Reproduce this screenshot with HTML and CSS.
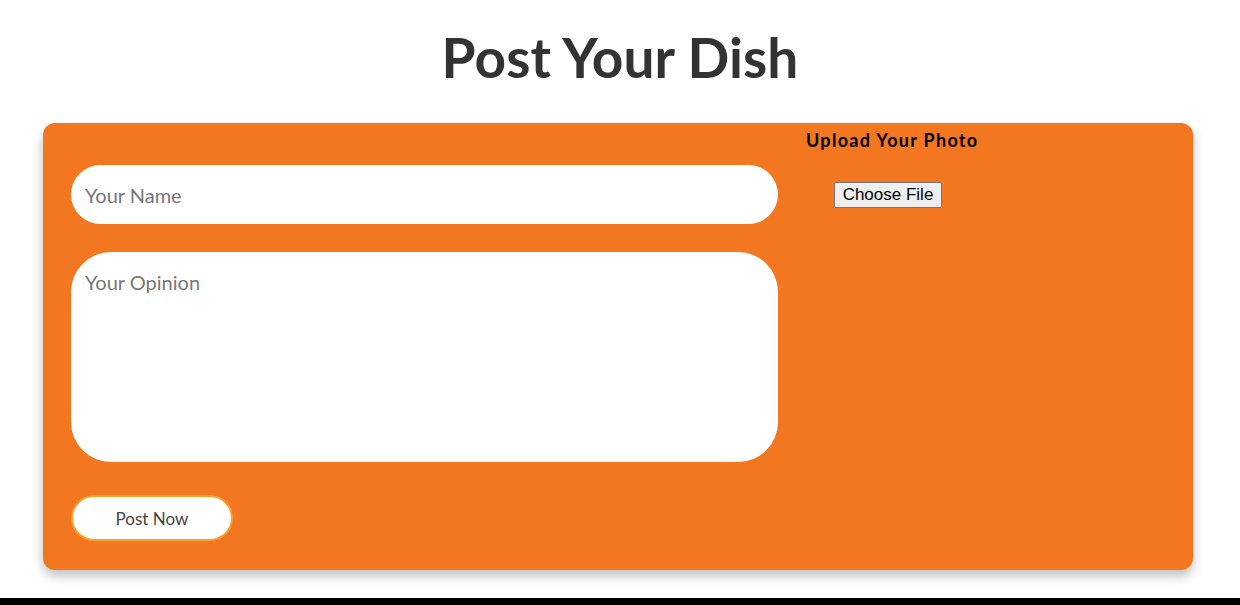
FILE: index.html
```html
<!DOCTYPE html>
<html>
<head>
<meta charset="utf-8">
<link rel="stylesheet" href="styles.css">
</head>
<body>
<h1 class="title">Post Your Dish</h1>
<form class="card">
  <div class="left">
    <input class="name" type="text" placeholder="Your Name">
    <textarea class="opinion" placeholder="Your Opinion"></textarea>
    <button class="post" type="button">Post Now</button>
  </div>
  <div class="right">
    <label class="upload-label">Upload Your Photo</label>
    <input class="file" type="file">
  </div>
</form>
<div class="footer"></div>
</body>
</html>
```

FILE: styles.css
```css
html, body {
  margin: 0;
  padding: 0;
  background: #fff;
  font-family: "Lato", "Noto Sans", sans-serif;
  overflow: hidden;
}
.title {
  margin: 0;
  padding-top: 25px;
  height: 123px;
  box-sizing: border-box;
  text-align: center;
  font-size: 55px;
  line-height: 64px;
  font-weight: 700;
  color: #333;
  letter-spacing: 0.1px;
}
.card {
  margin-left: 43px;
  width: 1150px;
  height: 447px;
  box-sizing: border-box;
  background: #f37720;
  border-radius: 12px;
  box-shadow: 0 6px 12px rgba(0,0,0,0.25);
  display: flex;
  gap: 28px;
  padding: 0 28px;
}
.left {
  width: 707px;
  display: flex;
  flex-direction: column;
  padding-top: 42px;
}
.name, .opinion {
  width: 707px;
  border: none;
  outline: none;
  background: #fff;
  box-sizing: border-box;
  font-family: "Lato", "Noto Sans", sans-serif;
  font-size: 20px;
  color: #333;
  padding: 0 14px;
}
.name {
  height: 59px;
  border-radius: 30px;
}
.opinion {
  margin-top: 28px;
  height: 210px;
  border-radius: 40px;
  padding-top: 18px;
  resize: none;
}
.name::placeholder, .opinion::placeholder {
  color: #777;
}
.post {
  margin-top: 33px;
  width: 162px;
  height: 46px;
  border: 2px solid #f9a12d;
  border-radius: 23px;
  background: #fff;
  font-family: "Lato", "Noto Sans", sans-serif;
  font-size: 17px;
  color: #444;
}
.right {
  display: flex;
  flex-direction: column;
  align-items: flex-start;
  padding-top: 7px;
}
.upload-label {
  font-size: 18px;
  font-weight: 700;
  color: #000;
  line-height: 20px;
  letter-spacing: 1.3px;
}
.file {
  margin-top: 32px;
  margin-left: 28px;
  width: 108px;
  overflow: hidden;
  color: transparent;
  font-family: "Liberation Sans", Arial, sans-serif;
  font-size: 16px;
}
.file::file-selector-button {
  width: 108px;
  height: 26px;
  margin: 0;
  padding: 0 4px;
  border: 1px solid #767676;
  border-radius: 2px;
  background: #efefef;
  color: #000;
  font-family: "Liberation Sans", Arial, sans-serif;
  font-size: 17px;
}
.footer {
  margin-top: 28px;
  height: 10px;
  background: #000;
}
```
